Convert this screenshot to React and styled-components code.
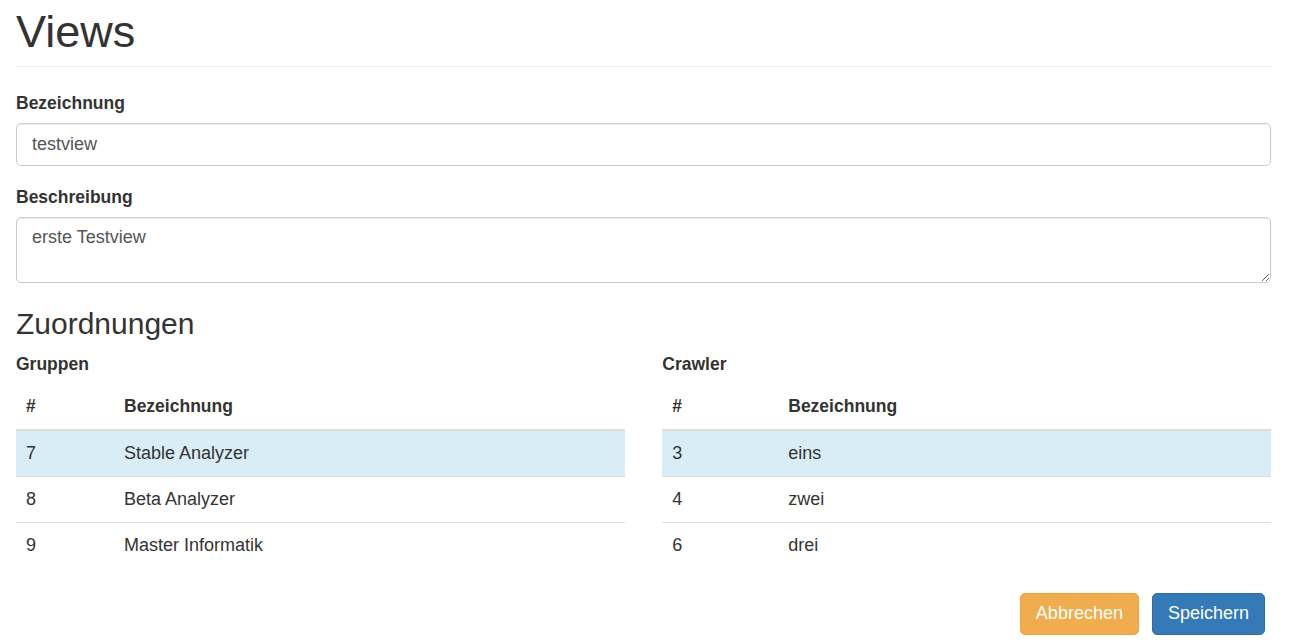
import React from "react";
import styled, { createGlobalStyle } from "styled-components";

const GlobalStyle = createGlobalStyle`
    html, body {
        margin: 0;
        padding: 0;
        background: #fff;
    }
    body {
        font-family: "Liberation Sans", Arial, sans-serif;
        font-size: 18px;
        line-height: 25px;
        color: #333;
    }
    * {
        box-sizing: border-box;
    }
`;

const Page = styled.div`
    padding: 0 18px 0 16px;
`;

const PageHeader = styled.h1`
    margin: 7px 0 24px;
    padding-bottom: 9px;
    border-bottom: 1px solid #eee;
    font-size: 45px;
    line-height: 49.5px;
    font-weight: 500;
    color: #333;
`;

const FormGroup = styled.div`
    margin-bottom: 19px;
`;

const Label = styled.label`
    display: block;
    margin-bottom: 7px;
    font-size: 17.5px;
    font-weight: 700;
    line-height: 25px;
`;

const fieldStyle = `
    display: block;
    width: 100%;
    padding: 7.5px 15px;
    font-family: "Liberation Sans", Arial, sans-serif;
    font-size: 18px;
    line-height: 25px;
    color: #555;
    background: #fff;
    border: 1px solid #ccc;
    border-radius: 5px;
    box-shadow: inset 0 1px 1px rgba(0, 0, 0, 0.075);
    outline: none;
`;

const Input = styled.input`
    ${fieldStyle}
    height: 43px;
`;

const TextArea = styled.textarea`
    ${fieldStyle}
    height: 66px;
    resize: vertical;
    margin: 0;
`;

const SectionTitle = styled.h3`
    margin: 24px 0 12px;
    font-size: 30px;
    line-height: 33px;
    font-weight: 500;
`;

const Columns = styled.div`
    display: grid;
    grid-template-columns: 1fr 1fr;
    column-gap: 37.5px;
`;

const Table = styled.table`
    width: 100%;
    border-collapse: collapse;
    border-spacing: 0;
    margin-bottom: 25px;
`;

const Th = styled.th`
    width: ${(p) => p.$width || "auto"};
    padding: 10px;
    text-align: left;
    font-size: 17.5px;
    font-weight: 700;
    line-height: 25px;
    vertical-align: bottom;
    border-bottom: 2px solid #ddd;
`;

const Row = styled.tr`
    background: ${(p) => (p.$active ? "#d9edf7" : "transparent")};
`;

const Td = styled.td`
    padding: 10px;
    line-height: 25px;
    border-top: 1px solid #ddd;
    vertical-align: top;
`;

const Actions = styled.div`
    display: flex;
    justify-content: flex-end;
    gap: 13px;
    padding-right: 6px;
`;

const Button = styled.button`
    padding: 7.5px 15px;
    font-family: "Liberation Sans", Arial, sans-serif;
    font-size: 18px;
    line-height: 25px;
    color: #fff;
    border-radius: 5px;
    border: 1px solid ${(p) => (p.$variant === "primary" ? "#2e6da4" : "#eea236")};
    background: ${(p) => (p.$variant === "primary" ? "#337ab7" : "#f0ad4e")};
    cursor: pointer;
`;

const gruppen = [
    { id: 7, title: "Stable Analyzer" },
    { id: 8, title: "Beta Analyzer" },
    { id: 9, title: "Master Informatik" },
];

const crawler = [
    { id: 3, title: "eins" },
    { id: 4, title: "zwei" },
    { id: 6, title: "drei" },
];

function AssignTable({ title, items, firstWidth }) {
    return (
        <div>
            <Label>{title}</Label>
            <Table>
                <thead>
                <tr>
                    <Th $width={firstWidth}>#</Th>
                    <Th>Bezeichnung</Th>
                </tr>
                </thead>
                <tbody>
                {items.map((item, i) => (
                    <Row key={item.id} $active={i === 0}>
                        <Td>{item.id}</Td>
                        <Td>{item.title}</Td>
                    </Row>
                ))}
                </tbody>
            </Table>
        </div>
    );
}

export default function App() {
    return (
        <Page>
            <GlobalStyle />
            <PageHeader>Views</PageHeader>
            <FormGroup>
                <Label>Bezeichnung</Label>
                <Input defaultValue="testview" />
            </FormGroup>
            <FormGroup>
                <Label>Beschreibung</Label>
                <TextArea defaultValue="erste Testview" />
            </FormGroup>
            <SectionTitle>Zuordnungen</SectionTitle>
            <Columns>
                <AssignTable title="Gruppen" items={gruppen} firstWidth="98px" />
                <AssignTable title="Crawler" items={crawler} firstWidth="116px" />
            </Columns>
            <Actions>
                <Button $variant="warning">Abbrechen</Button>
                <Button $variant="primary">Speichern</Button>
            </Actions>
        </Page>
    );
}
